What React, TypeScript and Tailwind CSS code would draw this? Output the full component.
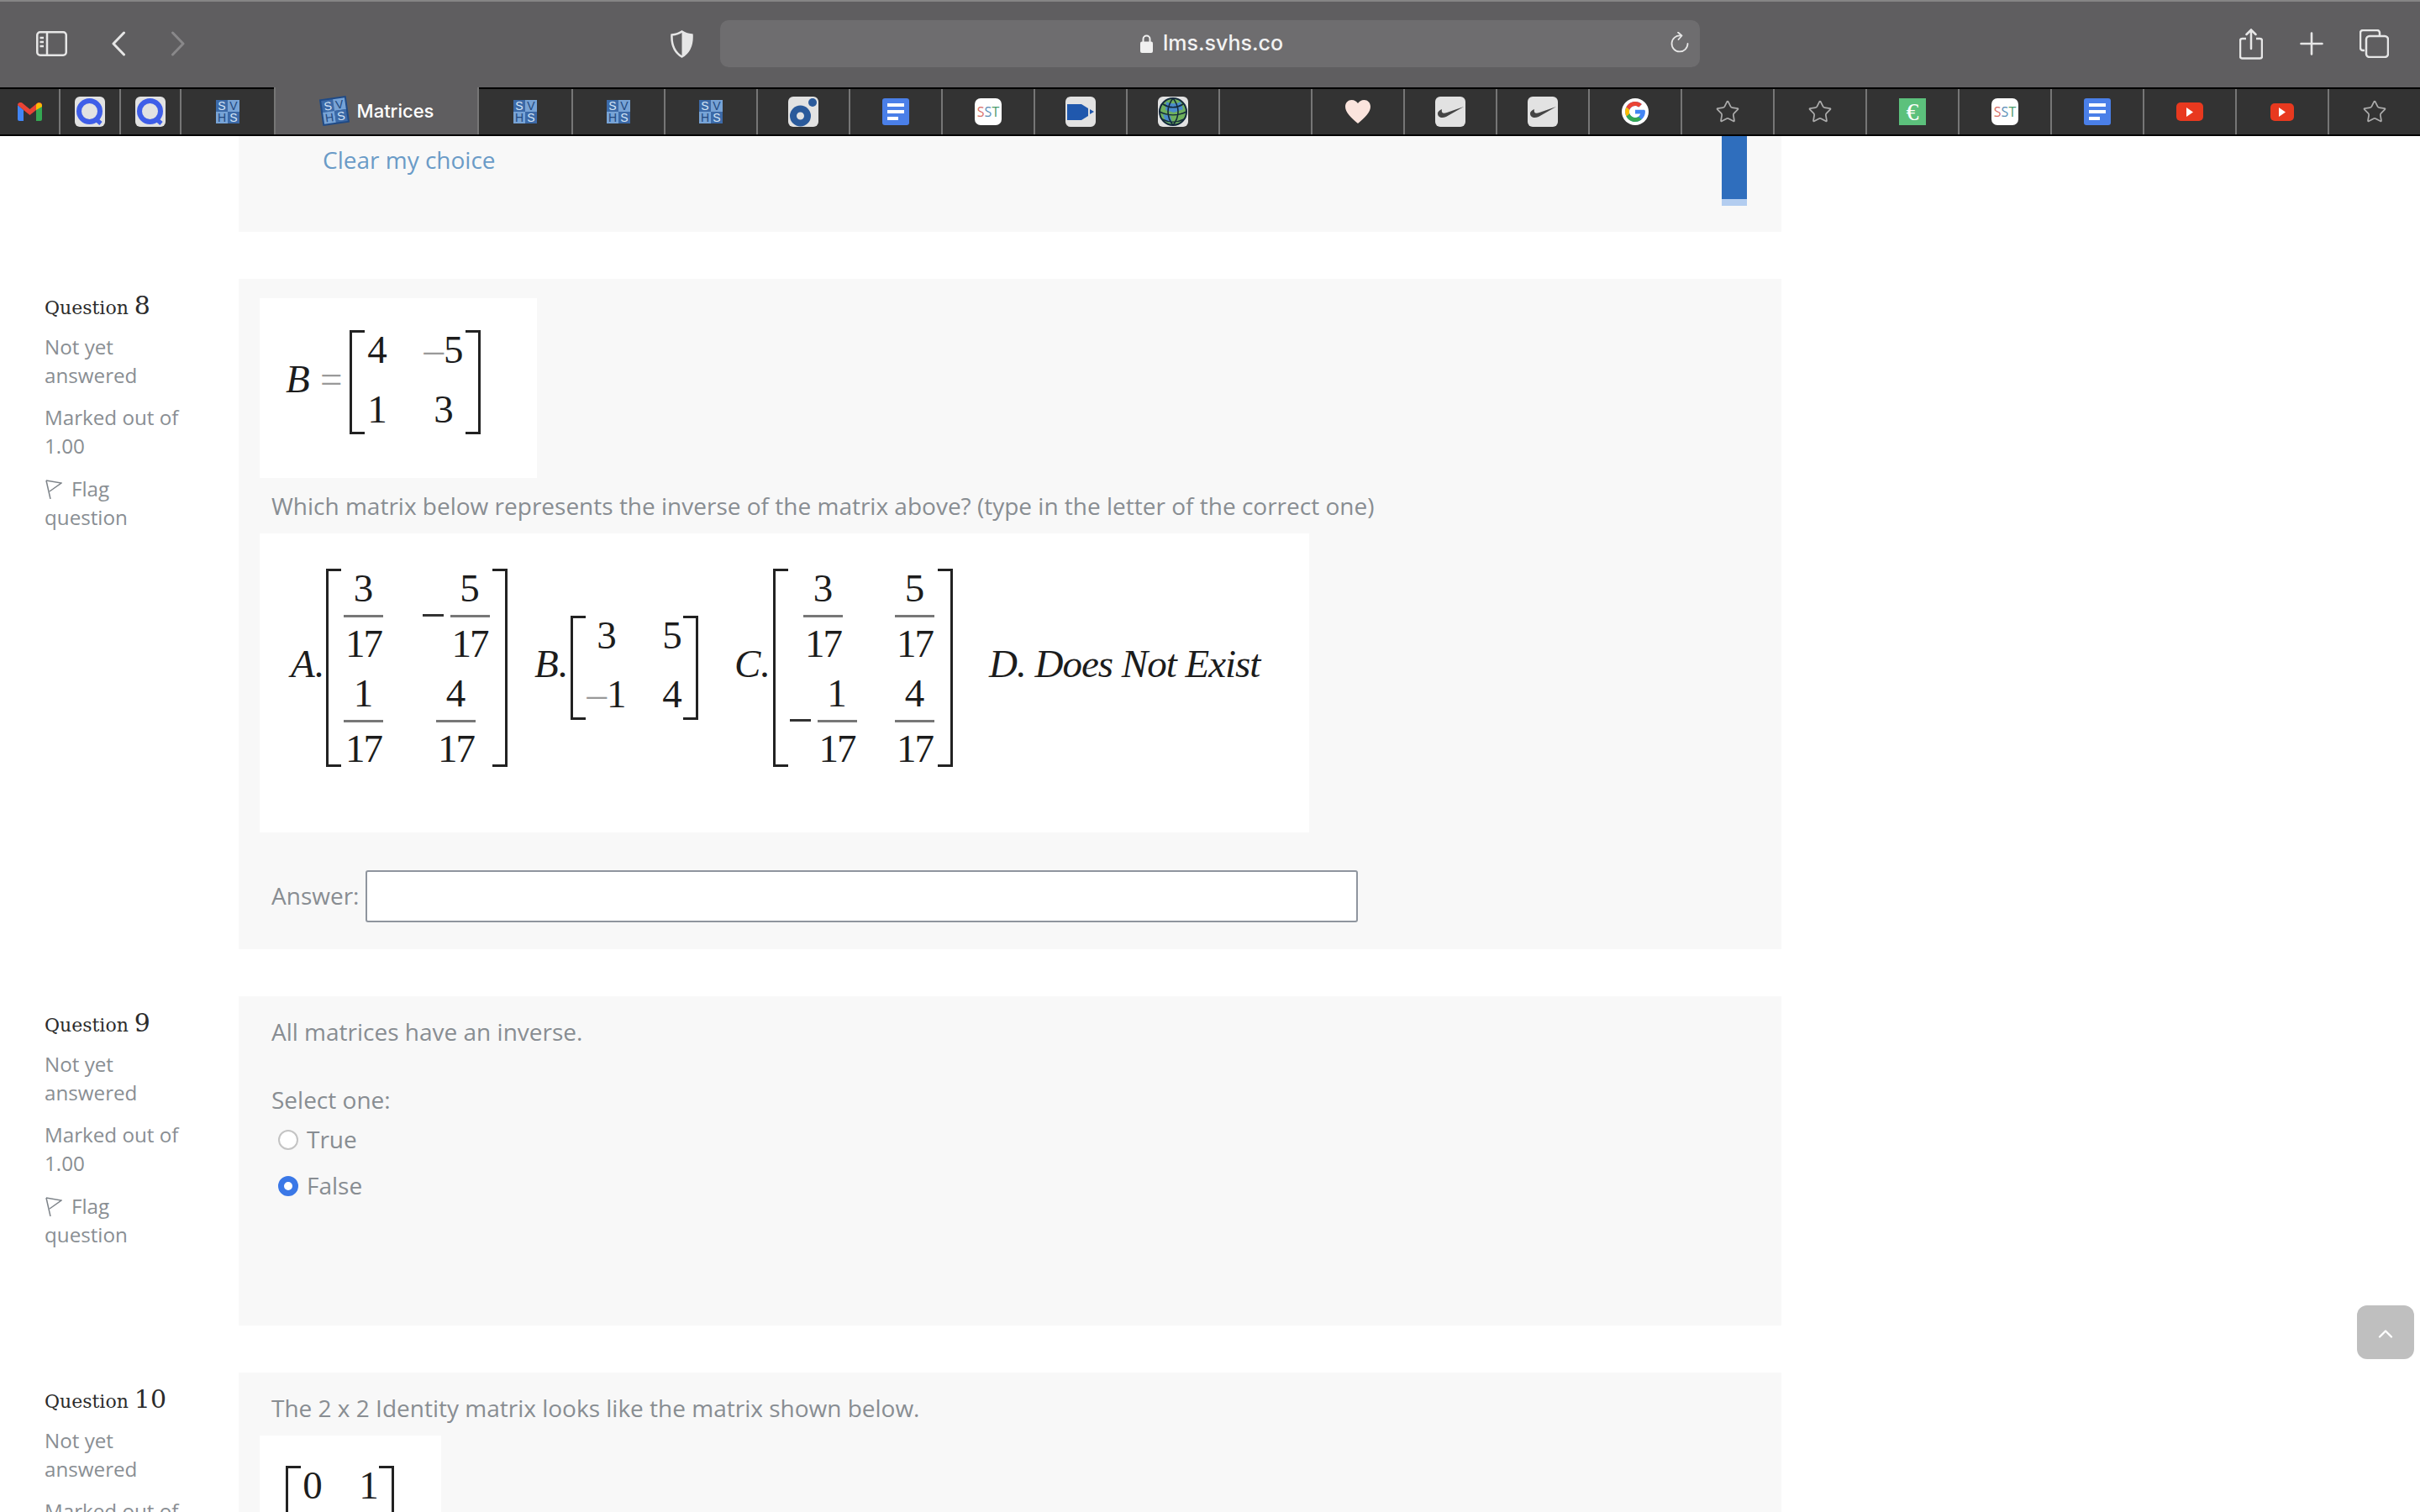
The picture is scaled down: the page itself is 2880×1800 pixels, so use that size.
import React from 'react';
import { ChevronUp, Star } from 'lucide-react';

const serif = "font-['Liberation_Serif',serif] text-[#1c1c1c] text-[47px] leading-[47px]";

function Sep() {
  return <div className="w-[2px] h-full bg-[#767676] shrink-0" />;
}

function Svhs({ tilt }: { tilt?: boolean }) {
  return (
    <div className={`w-[28px] h-[28px] grid grid-cols-2 grid-rows-2 text-[14px] leading-none font-['Liberation_Sans',sans-serif] ${tilt ? 'rotate-[-8deg] bg-[#1f4a86] p-[2px] box-content' : ''}`}>
      <span className="bg-[#3c6aa8] text-[#d5e4f6] flex items-center justify-center">S</span>
      <span className="bg-[#77a3d6] text-[#23497f] flex items-center justify-center">V</span>
      <span className="bg-[#77a3d6] text-[#23497f] flex items-center justify-center">H</span>
      <span className="bg-[#3c6aa8] text-[#d5e4f6] flex items-center justify-center">S</span>
    </div>
  );
}

function Tile({ children }: { children?: React.ReactNode }) {
  return <div className="w-[36px] h-[36px] rounded-[6px] bg-[#e2e2e2] flex items-center justify-center overflow-hidden">{children}</div>;
}

function QIcon() {
  return (
    <Tile>
      <svg width="36" height="36" viewBox="0 0 36 36" fill="none">
        <circle cx="17.500" cy="17.500" r="12.500" stroke="#3f5ee8" strokeWidth="6" />
        <path d="M24 26l7 6" stroke="#3f5ee8" strokeWidth="5" />
      </svg>
    </Tile>
  );
}

function Gmail() {
  return (
    <svg width="29" height="22" viewBox="0 0 29 22">
      <path d="M0 3v17a2 2 0 002 2h5V9z" fill="#4285f4" />
      <path d="M29 3v17a2 2 0 01-2 2h-5V9z" fill="#34a853" />
      <path d="M0 3c0-3 4-4 6-2l8.500 7L23 1c2-2 6-1 6 2l-7 6-7.500 6L7 9z" fill="#ea4335" />
      <path d="M22 2.500c2-3.500 7-2 7 1v1.500l-7 4z" fill="#fbbc04" />
    </svg>
  );
}

function Docs() {
  return (
    <div className="w-[32px] h-[32px] rounded-[3px] bg-[#4a7fe8] flex flex-col justify-center gap-[4px] px-[6px]">
      <div className="h-[4px] bg-white" />
      <div className="h-[4px] bg-white" />
      <div className="h-[4px] w-[13px] bg-white" />
    </div>
  );
}

function Sst() {
  return (
    <div className="w-[32px] h-[32px] rounded-[7px] bg-white flex items-center justify-center text-[16px] font-['Open_Sans',sans-serif]">
      <span className="text-[#d9706b]">S</span><span className="text-[#5b8fb8]">S</span><span className="text-[#4a9c6d]">T</span>
    </div>
  );
}

function Youtube({ small }: { small?: boolean }) {
  return (
    <div className={`${small ? 'w-[28px] h-[21px]' : 'w-[32px] h-[22px]'} rounded-[5px] bg-[#e8391f] flex items-center justify-center`}>
      <svg width="8" height="11" viewBox="0 0 8 11"><path d="M0 0l8 5.500-8 5.500z" fill="#fff" /></svg>
    </div>
  );
}

function Nike() {
  return (
    <Tile>
      <svg width="32" height="18" viewBox="0 0 32 18"><path d="M1 11c0 5 5 6 10 4L32 3 12 10c-5 2-7 0-6-4-3 1-5 3-5 5z" fill="#454545" /></svg>
    </Tile>
  );
}

function StarIcon() {
  return <Star size={30} strokeWidth={1.4} className="text-[#ababab]" />;
}

function Tab({ w = 'w-[108px]', children }: { w?: string; children?: React.ReactNode }) {
  return <div className={`${w} h-full shrink-0 flex items-center justify-center`}>{children}</div>;
}

function TabBar() {
  return (
    <div className="h-[58px] flex bg-[#333333] border-y-2 border-black">
      <Tab w="w-[70px]"><Gmail /></Tab><Sep />
      <Tab w="w-[70px]"><QIcon /></Tab><Sep />
      <Tab w="w-[70px]"><QIcon /></Tab><Sep />
      <Tab w="w-[110px]"><Svhs /></Tab>
      <div className="w-[244px] h-[56px] -mt-[2px] shrink-0 flex items-center justify-center gap-[11px] pl-[2px] bg-[#5f5e60] border-x-2 border-[#767676]">
        <Svhs tilt />
        <span className="text-white text-[22px] font-medium font-['Inter',sans-serif]">Matrices</span>
      </div>
      <Tab w="w-[110px]"><Svhs /></Tab><Sep />
      <Tab><Svhs /></Tab><Sep />
      <Tab><Svhs /></Tab><Sep />
      <Tab>
        <Tile>
          <svg width="36" height="36" viewBox="0 0 36 36">
            <circle cx="14.500" cy="23" r="8.500" fill="none" stroke="#2a5a9b" strokeWidth="8" />
            <circle cx="29" cy="7" r="5" fill="#2a5a9b" />
          </svg>
        </Tile>
      </Tab><Sep />
      <Tab><Docs /></Tab><Sep />
      <Tab><Sst /></Tab><Sep />
      <Tab>
        <Tile>
          <svg width="36" height="36" viewBox="0 0 36 36"><path d="M2 9h17l8 5v9l-8 5H2z" fill="#2058ad" /><path d="M29 15l5 3-5 3z" fill="#2058ad" /></svg>
        </Tile>
      </Tab><Sep />
      <Tab>
        <Tile>
          <svg width="36" height="36" viewBox="0 0 36 36">
            <circle cx="18" cy="18" r="16" fill="#6fb05c" />
            <path d="M10 6c5 3 12 3 17 0l3 9-11 4-10-3z" fill="#4a8bcc" />
            <path d="M6 21l9 2 2 9-8-3z" fill="#4a8bcc" />
            <circle cx="18" cy="18" r="16" fill="none" stroke="#142a3c" strokeWidth="2" />
            <path d="M6 9c8 5 16 5 24 0M2 18c10 5 22 5 32 0M5 27c8 4 18 4 26 0M18 2c-8 10-8 22 0 32M18 2c8 10 8 22 0 32" stroke="#142a3c" strokeWidth="1.600" fill="none" />
          </svg>
        </Tile>
      </Tab><Sep />
      <Tab /><Sep />
      <Tab>
        <svg width="30" height="28" viewBox="0 0 30 28"><path d="M15 28C7 21 0 15 0 8c0-5 3.500-8 7.500-8C11 0 13.500 2 15 4c1.500-2 4-4 7.500-4C26.500 0 30 3 30 8c0 7-7 13-15 20z" fill="#fbe4dd" /></svg>
      </Tab><Sep />
      <Tab><Nike /></Tab><Sep />
      <Tab><Nike /></Tab><Sep />
      <Tab>
        <div className="w-[32px] h-[32px] rounded-full bg-white flex items-center justify-center">
          <svg width="26" height="26" viewBox="0 0 48 48">
            <path d="M44 20H24v8.500h11.500C34 33.500 29.500 37 24 37c-7 0-13-6-13-13s6-13 13-13c3 0 6 1 8 3l6.500-6.500C34.500 4 29.500 2 24 2 12 2 2 12 2 24s10 22 22 22 22-9 22-22c0-1.500 0-3-2-4z" fill="#4285f4" />
            <path d="M4.500 14l7 5.500C13.500 14.500 18.500 11 24 11c3 0 6 1 8 3l6.500-6.500C34.500 4 29.500 2 24 2 15.500 2 8 7 4.500 14z" fill="#ea4335" />
            <path d="M24 46c5.500 0 10.500-2 14-5.500l-6.500-5.500c-2 1.500-4.500 2-7.500 2-5.500 0-10.500-3.500-12.500-9l-7 5.500C8 41 15.500 46 24 46z" fill="#34a853" />
            <path d="M4.500 14C3 17 2 20.500 2 24s1 7 2.500 10l7-5.500c-.5-1.500-.5-3-.5-4.500s0-3 .5-4.500z" fill="#fbbc04" />
          </svg>
        </div>
      </Tab><Sep />
      <Tab><StarIcon /></Tab><Sep />
      <Tab><StarIcon /></Tab><Sep />
      <Tab>
        <div className="w-[32px] h-[32px] bg-[#5cc17c] flex items-center justify-center text-white text-[30px] font-['Liberation_Serif',serif] leading-none">€</div>
      </Tab><Sep />
      <Tab><Sst /></Tab><Sep />
      <Tab><Docs /></Tab><Sep />
      <Tab><Youtube /></Tab><Sep />
      <Tab><Youtube small /></Tab><Sep />
      <Tab><StarIcon /></Tab>
    </div>
  );
}

function Toolbar() {
  return (
    <div className="h-[104px] bg-[#5f5e60] border-t-2 border-[#858585] flex items-center text-[#e6e6e6] pb-[2px]">
      <svg className="ml-[43px]" width="37" height="30" viewBox="0 0 37 30" fill="none" stroke="#e6e6e6" strokeWidth="2.500">
        <rect x="1.250" y="1.250" width="34.500" height="27.500" rx="3.500" />
        <path d="M13 1v28M4.500 8h4.500M4.500 13h4.500M4.500 18h4.500" />
      </svg>
      <svg className="ml-[52px]" width="18" height="30" viewBox="0 0 18 30" fill="none" stroke="#e6e6e6" strokeWidth="3" strokeLinecap="round" strokeLinejoin="round">
        <path d="M15.500 2L3 15l12.500 13" />
      </svg>
      <svg className="ml-[53px]" width="18" height="30" viewBox="0 0 18 30" fill="none" stroke="#89888a" strokeWidth="3" strokeLinecap="round" strokeLinejoin="round">
        <path d="M2.500 2L15 15 2.500 28" />
      </svg>
      <svg className="ml-[577px]" width="27" height="33" viewBox="0 0 27 33">
        <path d="M13.500 1.500c3.500 2.500 7.500 3.500 12 4 .5 11-2 20-12 26-10-6-12.500-15-12-26 4.500-.5 8.500-1.500 12-4z" fill="none" stroke="#e6e6e6" strokeWidth="2.500" />
        <path d="M13.500 1.500c3.500 2.500 7.500 3.500 12 4 .5 11-2 20-12 26z" fill="#e6e6e6" />
      </svg>
      <div className="ml-[32px] w-[1166px] h-[56px] rounded-[10px] bg-[#6e6d6f] flex items-center relative">
        <div className="flex-1 flex items-center justify-center gap-[12px] pl-[4px]">
          <svg width="15" height="22" viewBox="0 0 15 22" fill="none">
            <path d="M3.500 9V5.500a4 4 0 018 0V9" stroke="#f0f0f0" strokeWidth="2" />
            <rect y="8.500" width="15" height="13.500" rx="2" fill="#f0f0f0" />
          </svg>
          <span className="text-[25px] font-medium text-[#f2f2f2] font-['Inter',sans-serif]">lms.svhs.co</span>
        </div>
        <svg className="absolute right-[13px] top-[14px]" width="22" height="26" viewBox="0 0 22 26" fill="none" stroke="#e6e6e6" strokeWidth="1.800" strokeLinecap="round" strokeLinejoin="round">
          <path d="M12 4.500a9.500 9.500 0 108.500 9.500" />
          <path d="M9 0.500l4.500 4-4 4.500" />
        </svg>
      </div>
      <svg className="ml-[642px]" width="28" height="37" viewBox="0 0 28 37" fill="none" stroke="#e6e6e6" strokeWidth="2.500">
        <path d="M8 12H3.500a2.500 2.500 0 00-2.500 2.500V33a2.500 2.500 0 002.500 2.500h21A2.500 2.500 0 0027 33V14.500a2.500 2.500 0 00-2.500-2.500H20" />
        <path d="M14 24V2M8.500 7L14 1.500 19.500 7" strokeLinecap="round" />
      </svg>
      <svg className="ml-[44px]" width="28" height="28" viewBox="0 0 28 28" stroke="#e6e6e6" strokeWidth="2.600" strokeLinecap="round">
        <path d="M14 1.500v25M1.500 14h25" />
      </svg>
      <svg className="ml-[43px]" width="35" height="34" viewBox="0 0 35 34" fill="none" stroke="#e6e6e6" strokeWidth="2.500">
        <path d="M6 25H4a3 3 0 01-3-3V4a3 3 0 013-3h17a3 3 0 013 3v3" />
        <rect x="8" y="8" width="26" height="25" rx="4" />
      </svg>
    </div>
  );
}

function FlagIcon() {
  return (
    <svg className="inline-block mr-[11px] align-[-3px]" width="21" height="23" viewBox="0 0 21 23" fill="none" stroke="#7d8389" strokeWidth="1.500">
      <path d="M2 1l5 22" />
      <path d="M2 1l18 3-14 10" />
    </svg>
  );
}

function Info({ n }: { n: string }) {
  return (
    <div className="w-[284px] shrink-0 pl-[53px] pr-[60px] font-['Open_Sans',sans-serif] text-[24.200px] leading-[34px] text-[#898e93]">
      <div className="h-[40px] mt-[15px] -mb-[3px] flex items-baseline gap-[7px] text-[#2b2b2b] font-['DejaVu_Serif',serif]">
        <span className="text-[22px]">Question</span>
        <span className="text-[30px]">{n}</span>
      </div>
      <div className="mt-[12px]">Not yet answered</div>
      <div className="mt-[16px]">Marked out of 1.00</div>
      <div className="mt-[17px]"><FlagIcon />Flag question</div>
    </div>
  );
}

function Bracket({ right }: { right?: boolean }) {
  return <div className={`w-[18px] shrink-0 border-y-[3px] border-[#222222] ${right ? 'border-r-[3px]' : 'border-l-[3px]'}`} />;
}

function Fraction({ top, minus }: { top: string; minus?: boolean }) {
  return (
    <div className="flex items-center justify-center gap-[8px]">
      {minus && <div className="w-[25px] h-[3px] bg-[#333333] mt-[-2px]" />}
      <div className={`w-[47px] flex flex-col items-center ${serif}`}>
        <span>{top}</span>
        <div className="w-full h-[3px] bg-[#777777] mt-[8px] mb-[8px]" />
        <span className="tracking-[-2px]">17</span>
      </div>
    </div>
  );
}

function Label({ children, w }: { children: string; w: string }) {
  return <div className={`${w} shrink-0 mb-[10px] italic ${serif}`}>{children}</div>;
}

function QuestionMatrices() {
  return (
    <div className="w-[1249px] h-[356px] bg-white ml-[-14px] pl-[37px] pb-[36px] flex items-center">
      <Label w="w-[42px]">A.</Label>
      <div className="w-[216px] h-[236px] flex">
        <Bracket />
        <div className="flex-1 grid grid-cols-[47px_81px] gap-x-[46px] gap-y-[12px] pl-[3px] content-start">
          <Fraction top="3" />
          <Fraction top="5" minus />
          <Fraction top="1" />
          <Fraction top="4" />
        </div>
        <Bracket right />
      </div>
      <Label w="w-[43px] ml-[32px]">B.</Label>
      <div className="w-[152px] h-[124px] flex">
        <Bracket />
        <div className={`flex-1 grid grid-cols-[50px_24px] gap-x-[41px] gap-y-[23px] content-start text-center whitespace-nowrap ${serif}`}>
          <span>3</span>
          <span>5</span>
          <span><span className="text-[#999999]">–</span>1</span>
          <span>4</span>
        </div>
        <Bracket right />
      </div>
      <Label w="w-[46px] ml-[43px]">C.</Label>
      <div className="w-[214px] h-[236px] flex">
        <Bracket />
        <div className="flex-1 grid grid-cols-[81px_47px] gap-x-[45px] gap-y-[12px] pl-[1px] content-start">
          <Fraction top="3" />
          <Fraction top="5" />
          <Fraction top="1" minus />
          <Fraction top="4" />
        </div>
        <Bracket right />
      </div>
      <Label w="ml-[43px] tracking-[-1px] whitespace-nowrap">D. Does Not Exist</Label>
    </div>
  );
}

function Panel({ h, children, className = '' }: { h: string; children?: React.ReactNode; className?: string }) {
  return <div className={`w-[1836px] bg-[#f8f8f8] pl-[39px] overflow-hidden ${h} ${className}`}>{children}</div>;
}

export default function App() {
  return (
    <div className="w-[2880px] h-[1800px] overflow-hidden bg-white relative font-['Open_Sans',sans-serif] text-[28px] text-[#888d92]">
      <Toolbar />
      <TabBar />
      <div className="flex">
        <div className="w-[284px] shrink-0" />
        <div className="w-[1836px] h-[114px] bg-[#f8f8f8] pl-[100px] pr-[41px] flex items-start justify-between">
          <span className="text-[#6a9bc7] mt-[6px] leading-[45px]">Clear my choice</span>
          <div className="w-[30px]">
            <div className="h-[75px] bg-[#2f6ebd]" />
            <div className="h-[8px] bg-[#b3cdf0]" />
          </div>
        </div>
      </div>

      <div className="flex mt-[56px]">
        <Info n="8" />
        <Panel h="h-[798px]" className="pt-[23px]">
          <div className="w-[330px] h-[214px] bg-white ml-[-14px] pl-[31px] pt-[38px] flex items-start">
            <div className={`w-[41px] mt-[35px] italic ${serif}`}>B</div>
            <div className={`w-[35px] mt-[35px] text-[#999999] ${serif}`}>=</div>
            <div className="w-[156px] h-[124px] flex">
              <Bracket />
              <div className={`flex-1 grid grid-cols-[30px_48px] gap-x-[40px] gap-y-[24px] content-start text-center whitespace-nowrap ${serif}`}>
                <span>4</span>
                <span><span className="text-[#999999]">–</span>5</span>
                <span>1</span>
                <span>3</span>
              </div>
              <Bracket right />
            </div>
          </div>
          <div className="h-[66px] flex items-center">Which matrix below represents the inverse of the matrix above? (type in the letter of the correct one)</div>
          <QuestionMatrices />
          <div className="mt-[45px] flex items-center gap-[8px]">
            <span className="-mt-[2px]">Answer:</span>
            <div className="w-[1181px] h-[62px] bg-white border-[2px] border-[#8f959e] rounded-[3px]" />
          </div>
        </Panel>
      </div>

      <div className="flex mt-[56px]">
        <Info n="9" />
        <Panel h="h-[392px]" className="pt-[20px]">
          <div className="leading-[45px]">All matrices have an inverse.</div>
          <div className="leading-[45px] mt-[36px]">Select one:</div>
          <div className="flex items-center gap-[10px] pl-[8px] mt-[2px] leading-[45px]">
            <div className="w-[24px] h-[24px] rounded-full bg-white border-[2px] border-[#c4c4c4]" />
            <span>True</span>
          </div>
          <div className="flex items-center gap-[10px] pl-[8px] mt-[10px] leading-[45px]">
            <div className="w-[24px] h-[24px] rounded-full bg-white border-[7px] border-[#3b78e7]" />
            <span>False</span>
          </div>
        </Panel>
      </div>

      <div className="flex mt-[56px]">
        <Info n="10" />
        <Panel h="h-[400px]" className="pt-[20px]">
          <div className="leading-[45px]">The 2 x 2 Identity matrix looks like the matrix shown below.</div>
          <div className="w-[216px] h-[200px] bg-white ml-[-14px] mt-[10px] pl-[31px] pt-[36px]">
            <div className="w-[129px] h-[124px] flex">
              <Bracket />
              <div className={`flex-1 grid grid-cols-[24px_24px] gap-x-[43px] pl-[2px] content-start text-center ${serif}`}>
                <span>0</span>
                <span>1</span>
              </div>
              <Bracket right />
            </div>
          </div>
        </Panel>
      </div>

      <div className="absolute left-[2805px] top-[1554px] w-[68px] h-[64px] rounded-[12px] bg-[#bfbfbf] flex items-center justify-center pt-[4px]">
        <ChevronUp size={28} strokeWidth={2} className="text-white" />
      </div>
    </div>
  );
}
